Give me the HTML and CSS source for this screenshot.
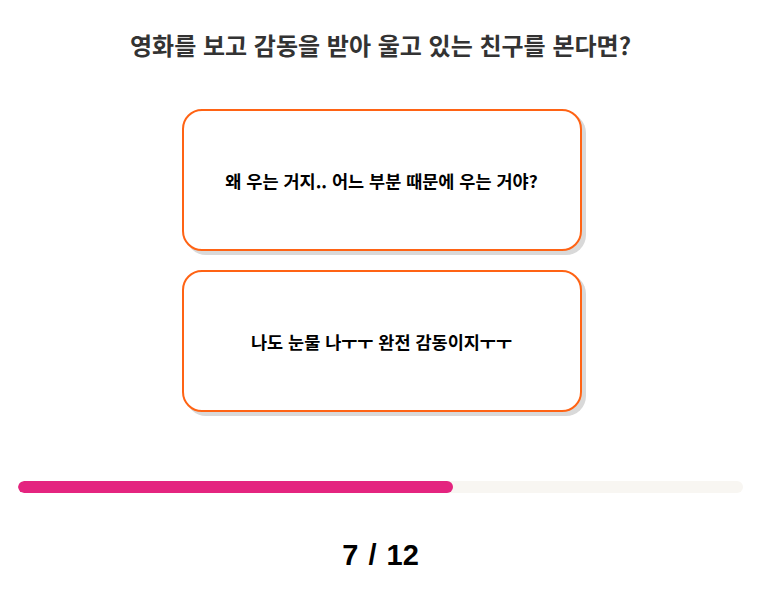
FILE: index.html
```html
<!DOCTYPE html>
<html lang="ko">
<head>
    <meta charset="UTF-8">
    <meta name="viewport" content="width=device-width, initial-scale=1.0">
    <title>심리 테스트</title>
    <link rel="stylesheet" href="styles.css">
</head>
<body>

<div class="quiz">
    <h2 class="question">영화를 보고 감동을 받아 울고 있는 친구를 본다면?</h2>

    <div class="answers">
        <button class="answer">왜 우는 거지.. 어느 부분 때문에 우는 거야?</button>
        <button class="answer">나도 눈물 나ㅜㅜ 완전 감동이지ㅜㅜ</button>
    </div>

    <div class="progress">
        <div class="progress-bar" style="width: 60%;"></div>
    </div>

    <div class="counter">7 / 12</div>
</div>

</body>
</html>
```

FILE: styles.css
```css
body {
    margin: 0;
    font-family: "Noto Sans CJK KR", "Noto Sans", sans-serif;
    background-color: #fff;
}
.quiz {
    padding-top: 27px;
}
.question {
    margin: 0;
    text-align: center;
    font-size: 24px;
    line-height: 36px;
    font-weight: 700;
    color: #333;
}
.answers {
    display: flex;
    flex-direction: column;
    align-items: center;
    gap: 19px;
    margin-top: 46px;
    padding-left: 2px;
}
.answer {
    width: 400px;
    height: 142px;
    box-sizing: border-box;
    border: 2px solid #ff6314;
    border-radius: 20px;
    box-shadow: 4px 4px 0 #d9d9d9;
    background: #fff;
    font-family: inherit;
    font-size: 17.5px;
    font-weight: 700;
    color: #000;
    cursor: pointer;
}
.answer:hover { background: #fff5ef; }
.progress {
    margin: 69px 18px 0;
    height: 12px;
    border-radius: 6px;
    background-color: #f8f6f2;
    overflow: hidden;
}
.progress-bar {
    height: 100%;
    border-radius: 6px;
    background-color: #e4247f;
}
.counter {
    margin-top: 45px;
    text-align: center;
    font-family: "Liberation Sans", Arial, sans-serif;
    font-size: 29px;
    line-height: 34px;
    font-weight: 700;
    color: #000;
    word-spacing: 2px;
}
```
